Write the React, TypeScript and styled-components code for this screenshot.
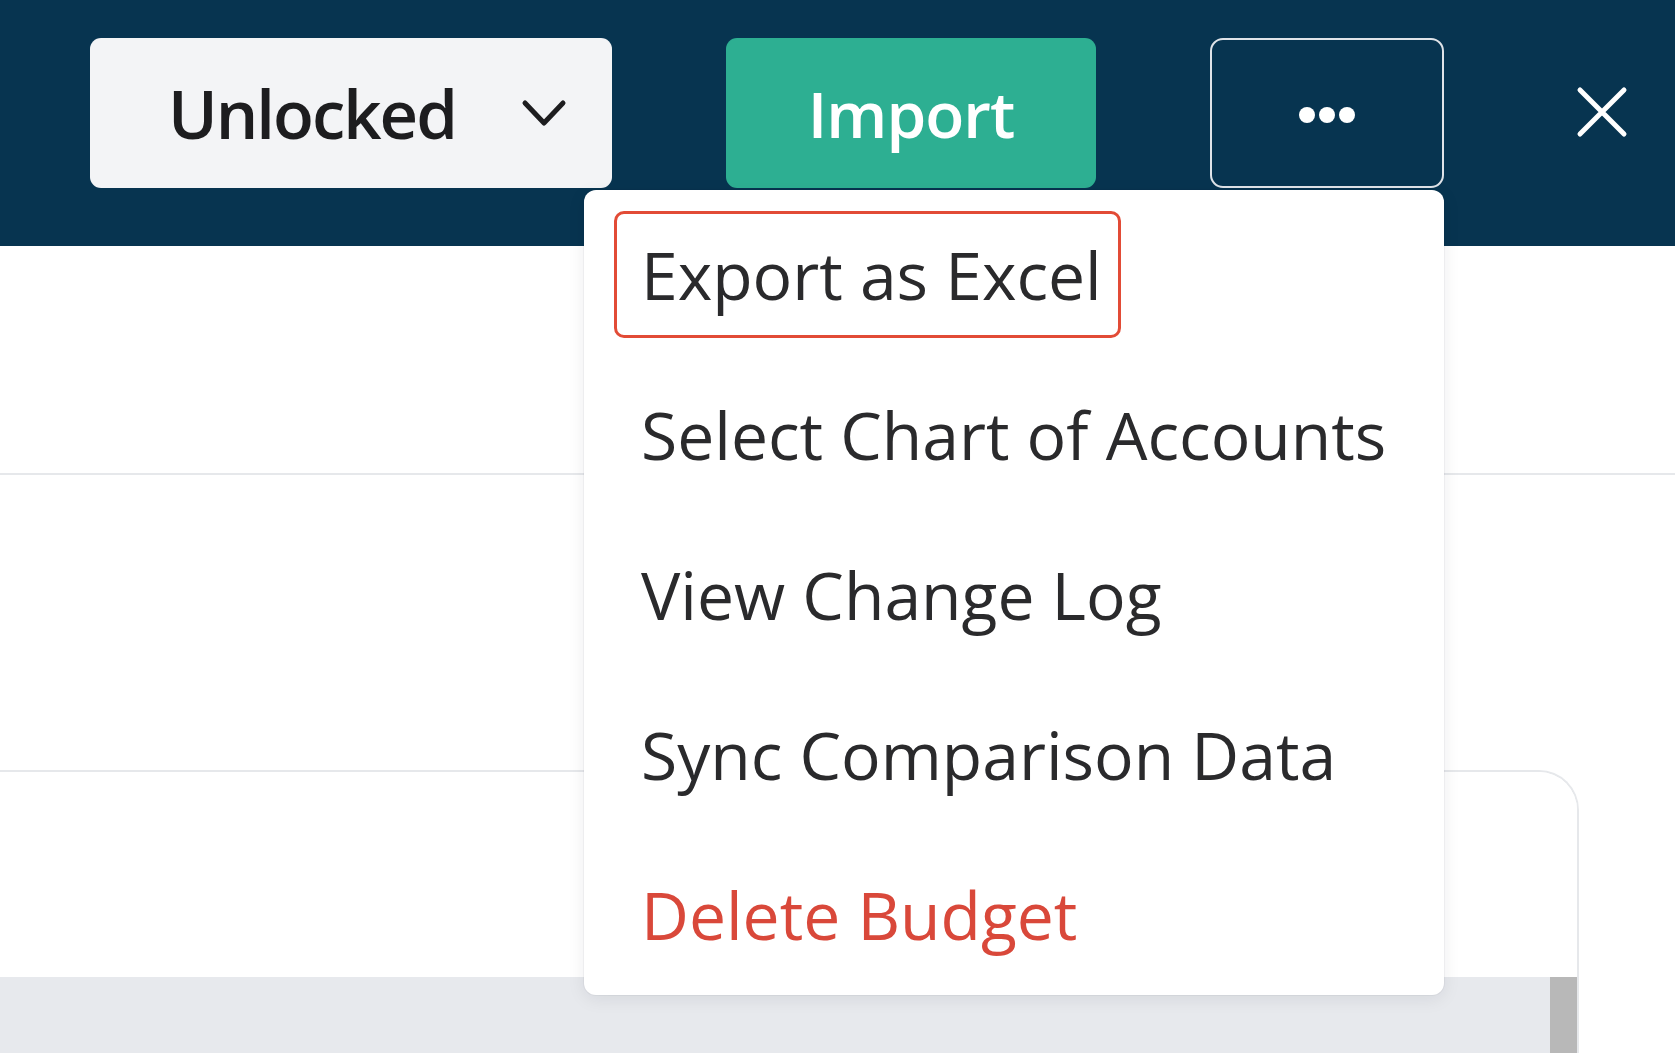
import React from 'react';
import styled, { createGlobalStyle } from 'styled-components';

const GlobalStyle = createGlobalStyle`
  html, body {
    margin: 0;
    padding: 0;
    background: #fff;
    font-family: 'Open Sans', 'Noto Sans', sans-serif;
  }
`;

const menuItems = [
  { key: 'export', label: 'Export as Excel', focused: true },
  { key: 'coa', label: 'Select Chart of Accounts' },
  { key: 'log', label: 'View Change Log' },
  { key: 'sync', label: 'Sync Comparison Data' },
  { key: 'delete', label: 'Delete Budget', danger: true },
];

export default function App() {
  return (
    <>
      <GlobalStyle />
      <Page>
        <Header>
          <StatusSelect>
            <span>Unlocked</span>
            <svg width="46" height="28" viewBox="0 0 46 28">
              <polyline
                points="4,4 23,24 42,4"
                fill="none"
                stroke="#1d1d1f"
                strokeWidth="5"
                strokeLinecap="round"
                strokeLinejoin="round"
              />
            </svg>
          </StatusSelect>
          <ImportButton>Import</ImportButton>
          <MoreWrap>
            <MoreButton aria-label="More">
              <svg width="60" height="18" viewBox="0 0 60 18">
                <circle cx="10" cy="9" r="8" fill="#fff" />
                <circle cx="30" cy="9" r="8" fill="#fff" />
                <circle cx="50" cy="9" r="8" fill="#fff" />
              </svg>
            </MoreButton>
            <Menu>
              {menuItems.map(item => (
                <MenuItem key={item.key} $focused={item.focused} $danger={item.danger}>
                  {item.label}
                </MenuItem>
              ))}
            </Menu>
          </MoreWrap>
          <CloseButton aria-label="Close">
            <svg width="52" height="52" viewBox="0 0 52 52">
              <path
                d="M4 4 L48 48 M48 4 L4 48"
                stroke="#fff"
                strokeWidth="5"
                strokeLinecap="round"
              />
            </svg>
          </CloseButton>
        </Header>
        <TitleBar />
        <FilterArea />
        <TableCard>
          <TableHead />
          <TableBody>
            <Scrollbar />
          </TableBody>
        </TableCard>
      </Page>
    </>
  );
}

const Page = styled.div`
  width: 1675px;
  height: 1053px;
  overflow: hidden;
  display: flex;
  flex-direction: column;
`;

const Header = styled.div`
  flex-shrink: 0;
  height: 246px;
  box-sizing: border-box;
  background: #073450;
  display: flex;
  align-items: flex-start;
  padding: 38px 0 0 90px;
`;

const StatusSelect = styled.div`
  width: 522px;
  height: 150px;
  box-sizing: border-box;
  padding: 0 45px 0 78px;
  background: #f3f4f6;
  border-radius: 11px;
  display: flex;
  align-items: center;
  justify-content: space-between;
  color: #1d1d1f;
  font-size: 67px;
  font-weight: 600;
  letter-spacing: -2px;
`;

const ImportButton = styled.button`
  margin-left: 114px;
  width: 370px;
  height: 150px;
  border: none;
  border-radius: 11px;
  background: #2daf92;
  color: #fff;
  font-family: inherit;
  font-size: 64px;
  font-weight: 600;
  letter-spacing: -1px;
  padding: 0;
`;

const MoreWrap = styled.div`
  position: relative;
  margin-left: 114px;
`;

const MoreButton = styled.button`
  width: 234px;
  height: 150px;
  box-sizing: border-box;
  border: 2px solid #dfe3e8;
  border-radius: 13px;
  background: transparent;
  display: flex;
  align-items: center;
  justify-content: center;
  padding: 4px 0 0;
`;

const Menu = styled.div`
  position: absolute;
  top: 152px;
  right: 0;
  width: 860px;
  box-sizing: border-box;
  padding: 21px 30px 17px;
  background: #fff;
  border-radius: 12px;
  box-shadow: 0 4px 18px rgba(16, 24, 40, 0.08), 0 0 0 1px rgba(16, 24, 40, 0.04);
  display: flex;
  flex-direction: column;
  gap: 33px;
  z-index: 10;
`;

const MenuItem = styled.div<{ $focused?: boolean; $danger?: boolean }>`
  align-self: flex-start;
  box-sizing: border-box;
  padding: 15px 16px 15px 24px;
  border: 3px solid ${p => (p.$focused ? '#e24b36' : 'transparent')};
  border-radius: 10px;
  font-size: 66px;
  line-height: 91px;
  white-space: nowrap;
  color: ${p => (p.$danger ? '#d9483a' : '#2a2a2c')};
`;

const CloseButton = styled.button`
  margin: 48px 0 0 132px;
  width: 52px;
  height: 52px;
  border: none;
  background: transparent;
  padding: 0;
  display: flex;
`;

const TitleBar = styled.div`
  flex-shrink: 0;
  height: 227px;
  border-bottom: 2px solid #e6e8eb;
`;

const FilterArea = styled.div`
  flex-shrink: 0;
  height: 295px;
`;

const TableCard = styled.div`
  flex: 1;
  display: flex;
  flex-direction: column;
  width: 1619px;
  margin-left: -40px;
  box-sizing: border-box;
  border: 2px solid #e6e8eb;
  border-bottom: none;
  border-radius: 0 40px 0 0;
  overflow: hidden;
`;

const TableHead = styled.div`
  flex-shrink: 0;
  height: 205px;
  background: #fff;
`;

const TableBody = styled.div`
  flex: 1;
  background: #e7e9ed;
  display: flex;
  justify-content: flex-end;
`;

const Scrollbar = styled.div`
  width: 27px;
  background: #b8b8b8;
`;
